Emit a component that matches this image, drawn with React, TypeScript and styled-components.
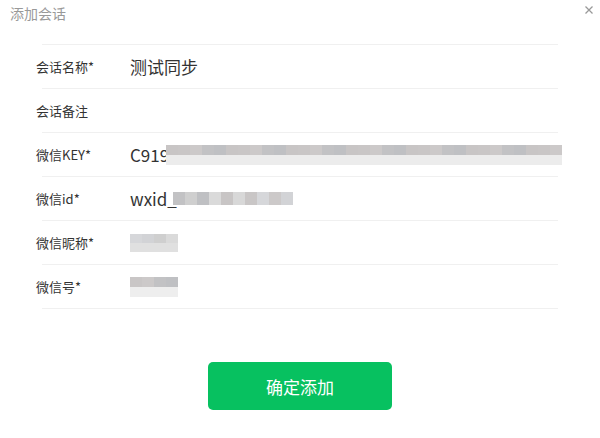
import styled, { createGlobalStyle } from "styled-components";

const GlobalStyle = createGlobalStyle`
  html, body {
    margin: 0;
    padding: 0;
    background: #fff;
  }
  body {
    font-family: "Noto Sans CJK SC", "Noto Sans", sans-serif;
    color: #333;
  }
`;

const Dialog = styled.div`
  width: 600px;
  height: 438px;
  background: #fff;
  display: flex;
  flex-direction: column;
`;

const Header = styled.div`
  height: 44px;
  display: flex;
  justify-content: space-between;
  align-items: flex-start;
`;

const Title = styled.div`
  padding: 3px 0 0 10px;
  font-size: 14px;
  line-height: 20px;
  color: #999;
`;

const Close = styled.button`
  border: 0;
  background: none;
  padding: 0;
  margin: 5px 6px 0 0;
  width: 10px;
  height: 10px;
  cursor: pointer;
  display: flex;
`;

const List = styled.div`
  margin: 0 42px;
  border-top: 1px solid #f0f0f0;
`;

const Row = styled.div`
  height: 43px;
  display: flex;
  align-items: center;
  border-bottom: 1px solid #f0f0f0;
`;

const Label = styled.div`
  width: 94px;
  margin-left: -6px;
  font-size: 13px;
  color: #333;
  flex-shrink: 0;
`;

const Value = styled.div`
  display: flex;
  align-items: center;
  font-size: 17px;
  color: #333;
  white-space: nowrap;
`;

const Mosaic = styled.div<{ cell: number; rows: number; shift?: number }>`
  display: grid;
  grid-template-rows: repeat(${(p) => p.rows}, ${(p) => p.cell}px);
  grid-auto-flow: column;
  grid-auto-columns: 12px;
  margin-left: ${(p) => p.shift ?? 0}px;
  filter: blur(0.4px);
`;

const Cell = styled.span`
  display: block;
`;

const Footer = styled.div`
  display: flex;
  justify-content: center;
  margin-top: 53px;
`;

const Primary = styled.button`
  width: 184px;
  height: 48px;
  border: 0;
  border-radius: 5px;
  background: #07c160;
  color: #fff;
  font-family: inherit;
  font-size: 17px;
  cursor: pointer;
`;

const shades = ["#cfcfcf", "#c8c5c5", "#d6d7da", "#c2c2c4", "#dadada", "#c9c6c6", "#d2d3d6", "#bfc0c3", "#d8d8d8", "#ccc9c9"];
const lights = ["#e6e6e6", "#ececec", "#e0e0e0", "#e9e9e9", "#e3e3e3", "#eeeeee", "#dedede"];

const makeCells = (count: number, rows: number, seed: number) => {
  const out: string[] = [];
  for (let i = 0; i < count * rows; i++) {
    const row = i % rows;
    const pool = rows > 1 && row === rows - 1 ? lights : shades;
    out.push(pool[(i * 7 + seed) % pool.length]);
  }
  return out;
};

const Blur = ({ count, rows, cell, seed, shift }: { count: number; rows: number; cell: number; seed: number; shift?: number }) => (
  <Mosaic rows={rows} cell={cell} shift={shift}>
    {makeCells(count, rows, seed).map((c, i) => (
      <Cell key={i} style={{ background: c }} />
    ))}
  </Mosaic>
);

export default function App() {
  return (
    <>
      <GlobalStyle />
      <Dialog>
        <Header>
          <Title>添加会话</Title>
          <Close aria-label="关闭">
            <svg width="10" height="10" viewBox="0 0 10 10">
              <path d="M1.5 1.5 L8.5 8.5 M8.5 1.5 L1.5 8.5" stroke="#999" strokeWidth="1.3" />
            </svg>
          </Close>
        </Header>
        <List>
          <Row>
            <Label>会话名称*</Label>
            <Value>测试同步</Value>
          </Row>
          <Row>
            <Label>会话备注</Label>
          </Row>
          <Row>
            <Label>微信KEY*</Label>
            <Value>
              C919
              <Blur count={33} rows={2} cell={10} seed={1} shift={-3} />
            </Value>
          </Row>
          <Row>
            <Label>微信id*</Label>
            <Value>
              wxid_
              <Blur count={10} rows={1} cell={13} seed={3} shift={-4} />
            </Value>
          </Row>
          <Row>
            <Label>微信昵称*</Label>
            <Value>
              <Blur count={4} rows={2} cell={9} seed={2} />
            </Value>
          </Row>
          <Row>
            <Label>微信号*</Label>
            <Value>
              <Blur count={4} rows={2} cell={10} seed={5} />
            </Value>
          </Row>
        </List>
        <Footer>
          <Primary>确定添加</Primary>
        </Footer>
      </Dialog>
    </>
  );
}
